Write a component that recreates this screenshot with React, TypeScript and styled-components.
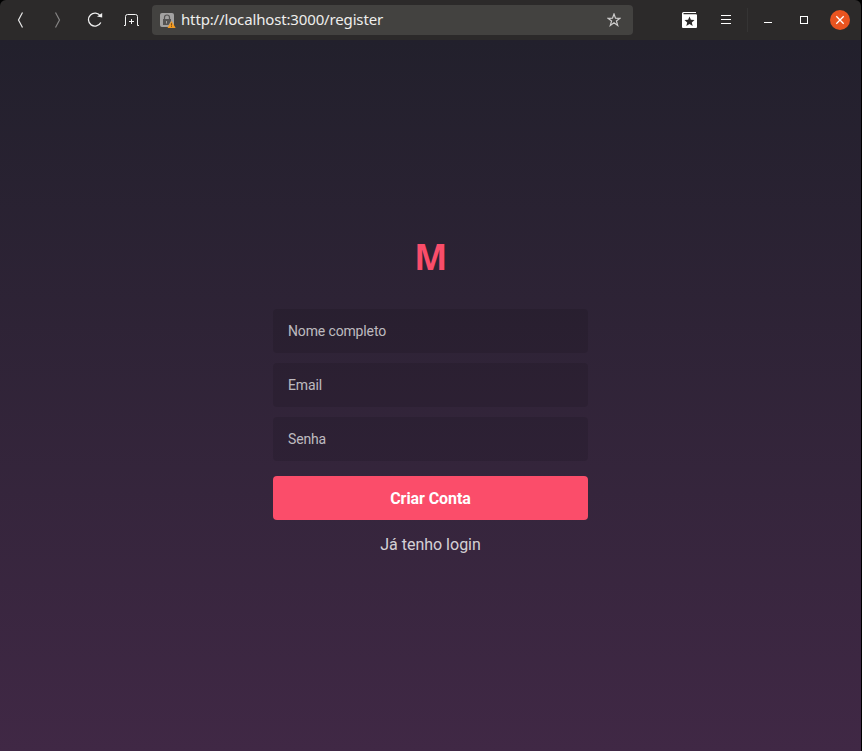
import React from "react";
import styled, { createGlobalStyle } from "styled-components";

const GlobalStyle = createGlobalStyle`
  * { margin: 0; padding: 0; box-sizing: border-box; }
  html, body, #root { height: 100%; }
  body { background: #000; overflow: hidden; font-family: Roboto, sans-serif; }
`;

const Window = styled.div`
  display: flex;
  flex-direction: column;
  width: 861px;
  height: 751px;
`;

const Toolbar = styled.header`
  display: flex;
  align-items: center;
  height: 40px;
  flex: none;
  background: #2c2a2a;
  border-radius: 6px 6px 0 0;
`;

const ToolButton = styled.button<{ $width: number }>`
  display: flex;
  align-items: center;
  justify-content: center;
  width: ${(p) => p.$width}px;
  height: 40px;
  flex: none;
  border: 0;
  background: none;
  svg { display: block; }
`;

const NavGroup = styled.nav`
  display: flex;
  width: 152px;
  padding-left: 2px;
`;

const AddressBar = styled.div`
  display: flex;
  align-items: center;
  width: 481px;
  height: 30px;
  padding-left: 8px;
  border-radius: 4px;
  background: #434240;
`;

const Url = styled.span`
  flex: 1;
  padding-left: 5px;
  color: #eeeeec;
  font: 15px/28px "Noto Sans", sans-serif;
  height: 30px;
  letter-spacing: -0.15px;
  white-space: nowrap;
`;

const Actions = styled.div`
  display: flex;
  padding-left: 38px;
`;

const WindowControls = styled.div`
  display: flex;
  align-items: center;
  margin-left: 3px;
`;

const Divider = styled.span`
  width: 1px;
  height: 24px;
  background: #353434;
`;

const Page = styled.main`
  flex: 1;
  display: flex;
  flex-direction: column;
  align-items: center;
  padding-top: 196px;
  background: linear-gradient(180deg, #22202c 0%, #402845 100%);
`;

const Logo = styled.h1`
  height: 42px;
  color: #f94d6a;
  font: 700 35px/42px "Open Sans", sans-serif;
  letter-spacing: -0.5px;
`;

const Form = styled.form`
  display: flex;
  flex-direction: column;
  width: 315px;
  margin-top: 31px;
`;

const Field = styled.input`
  height: 44px;
  margin-bottom: 10px;
  padding: 0 15px;
  border: 0;
  border-radius: 4px;
  background: rgba(0, 0, 0, 0.1);
  color: #fff;
  font: 14px Roboto, sans-serif;
  letter-spacing: -0.14px;
  &::placeholder { color: rgba(255, 255, 255, 0.7); }
`;

const Submit = styled.button`
  height: 44px;
  margin-top: 5px;
  border: 0;
  border-radius: 4px;
  background: #fb4d6a;
  color: #fff;
  font: 700 16px Roboto, sans-serif;
  letter-spacing: -0.08px;
`;

const LoginLink = styled.a`
  margin-top: 15px;
  text-align: center;
  color: rgba(255, 255, 255, 0.8);
  font-size: 16px;
  line-height: 19px;
`;

const Back = () => (
  <svg width="8" height="16" viewBox="0 0 8 16" fill="none" stroke="#e6e6e6" strokeWidth="1.2">
    <path d="M5.500 .5 1.500 8l4 7.500" />
  </svg>
);

const Forward = () => (
  <svg width="8" height="16" viewBox="0 0 8 16" fill="none" stroke="#858484" strokeWidth="1.2">
    <path d="M1.500 .5 5.500 8l-4 7.500" />
  </svg>
);

const Reload = () => (
  <svg width="16" height="16" viewBox="0 0 16 16">
    <path d="M13.400 4.100A6.500 6.500 0 1 0 13.800 10.500" fill="none" stroke="#f0f0f0" strokeWidth="1.300" />
    <path d="M15.200 1v4.500L10 4.600z" fill="#f0f0f0" />
  </svg>
);

const NewTab = () => (
  <svg width="16" height="12" viewBox="0 0 16 12" fill="none" stroke="#f4f4f4">
    <path d="M0 11.500H1.500V2.500Q1.500 .5 3.500 .5H11.500Q13.500 .5 13.500 2.500V11.500H15" />
    <path d="M7.500 5v5M5 7.500h5" />
  </svg>
);

const Security = () => (
  <svg width="16" height="16" viewBox="0 0 16 16">
    <rect x="0" y="1" width="14" height="14" rx="2" fill="#a3a2a1" />
    <path d="M4.500 7.500V5.500a2.500 2.500 0 0 1 5 0V7.500" fill="none" stroke="#555453" strokeWidth="1.200" />
    <path d="M3 7h8v2L8.500 13H3z" fill="#555453" />
    <path d="M6.500 9v2.500" stroke="#a3a2a1" />
    <path d="m11.500 9 4.200 7H7.500z" fill="#f49b20" />
    <path d="M11.500 11.200v2.300M11.500 14.200v.8" stroke="#5a3c18" strokeWidth=".8" />
  </svg>
);

const Star = () => (
  <svg width="14" height="14" viewBox="0 0 14 14" fill="none" stroke="#cecdcc" strokeWidth="1.200">
    <path d="m7 1 1.500 4.200 4.500.1-3.600 2.700 1.300 4.400L7 9.800l-3.700 2.600 1.300-4.400L1 5.300l4.500-.1z" />
  </svg>
);

const Bookmarks = () => (
  <svg width="15" height="16" viewBox="0 0 15 16">
    <path d="M1.500 0H14v1H1.500v1.200H14q1 0 1 1V15q0 1-1 1H1q-1 0-1-1V1.500Q0 0 1.500 0z" fill="#fff" />
    <path d="m7.500 4.500 1.400 3.300 3.600.3-2.700 2.300.9 3.500-3.200-1.900-3.200 1.900.9-3.500-2.700-2.300 3.600-.3z" fill="#2c2a2a" />
  </svg>
);

const Menu = () => (
  <svg width="10" height="10" viewBox="0 0 10 10" stroke="#fff">
    <path d="M0 .5h10M0 4.500h10M0 8.500h10" />
  </svg>
);

const Minimize = () => (
  <svg width="8" height="6" viewBox="0 0 8 6" stroke="#fff">
    <path d="M0 5.500h8" />
  </svg>
);

const Maximize = () => (
  <svg width="8" height="8" viewBox="0 0 8 8" fill="none" stroke="#fff">
    <rect x=".5" y=".5" width="7" height="7" />
  </svg>
);

const Close = () => (
  <svg width="20" height="20" viewBox="0 0 20 20">
    <circle cx="10" cy="10" r="10" fill="#e95420" />
    <path d="m6.300 6.300 7.400 7.400M13.700 6.300l-7.400 7.400" stroke="#fff" strokeWidth="1.300" />
  </svg>
);

export default function App() {
  return (
    <>
      <GlobalStyle />
      <Window>
        <Toolbar>
          <NavGroup>
            <ToolButton $width={37} aria-label="Back"><Back /></ToolButton>
            <ToolButton $width={37} aria-label="Forward"><Forward /></ToolButton>
            <ToolButton $width={38} aria-label="Reload"><Reload /></ToolButton>
            <ToolButton $width={36} aria-label="New tab"><NewTab /></ToolButton>
          </NavGroup>
          <AddressBar>
            <Security />
            <Url>http://localhost:3000/register</Url>
            <ToolButton $width={38} aria-label="Bookmark"><Star /></ToolButton>
          </AddressBar>
          <Actions>
            <ToolButton $width={37} aria-label="Bookmarks"><Bookmarks /></ToolButton>
            <ToolButton $width={36} aria-label="Menu"><Menu /></ToolButton>
          </Actions>
          <WindowControls>
            <Divider />
            <ToolButton $width={40} aria-label="Minimize"><Minimize /></ToolButton>
            <ToolButton $width={32} aria-label="Maximize"><Maximize /></ToolButton>
            <ToolButton $width={40} aria-label="Close"><Close /></ToolButton>
          </WindowControls>
        </Toolbar>
        <Page>
          <Logo>M</Logo>
          <Form>
            <Field placeholder="Nome completo" />
            <Field placeholder="Email" />
            <Field placeholder="Senha" />
            <Submit type="button">Criar Conta</Submit>
            <LoginLink>Já tenho login</LoginLink>
          </Form>
        </Page>
      </Window>
    </>
  );
}
